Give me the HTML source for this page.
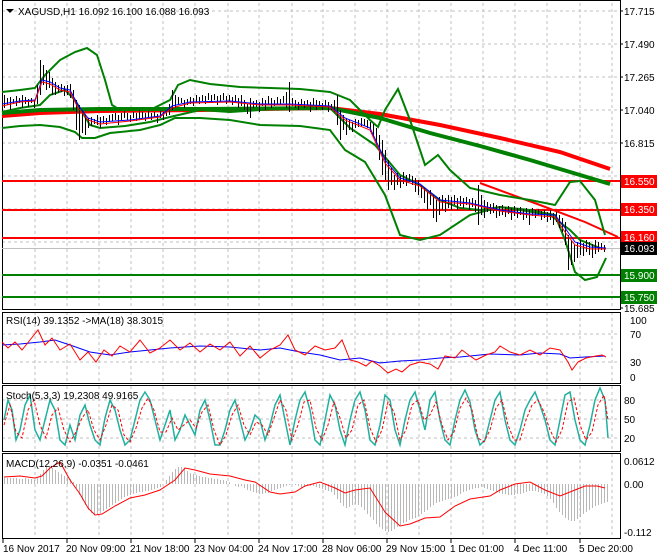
<!DOCTYPE html>
<html><head><meta charset="utf-8"><style>
html,body{margin:0;padding:0;background:#fff;}
svg{display:block;font-family:"Liberation Sans",sans-serif;font-size:10px;}
</style></head><body>
<svg width="660" height="560" viewBox="0 0 660 560" xmlns="http://www.w3.org/2000/svg">
<rect width="660" height="560" fill="#fff"/>
<g stroke="#c0c0c0" stroke-dasharray="3,3" stroke-width="1" fill="none" shape-rendering="crispEdges">
<path d="M35 3V309M67 3V309M99 3V309M131 3V309M163 3V309M195 3V309M228 3V309M259 3V309M292 3V309M323 3V309M355 3V309M387 3V309M419 3V309M451 3V309M483 3V309M515 3V309M547 3V309M580 3V309M612 3V309"/>
<path d="M2 11H620M2 44H620M2 77H620M2 110H620M2 143H620M2 176H620M2 209H620M2 242H620M2 275H620"/>
<path d="M35 312V384M67 312V384M99 312V384M131 312V384M163 312V384M195 312V384M228 312V384M259 312V384M292 312V384M323 312V384M355 312V384M387 312V384M419 312V384M451 312V384M483 312V384M515 312V384M547 312V384M580 312V384M612 312V384"/>
<path d="M2 334H620M2 362H620"/>
<path d="M35 386V452M67 386V452M99 386V452M131 386V452M163 386V452M195 386V452M228 386V452M259 386V452M292 386V452M323 386V452M355 386V452M387 386V452M419 386V452M451 386V452M483 386V452M515 386V452M547 386V452M580 386V452M612 386V452"/>
<path d="M2 400H620M2 419H620M2 438H620"/>
<path d="M35 454V538M67 454V538M99 454V538M131 454V538M163 454V538M195 454V538M228 454V538M259 454V538M292 454V538M323 454V538M355 454V538M387 454V538M419 454V538M451 454V538M483 454V538M515 454V538M547 454V538M580 454V538M612 454V538"/>
</g>
<g stroke="#000" fill="none" stroke-width="1" shape-rendering="crispEdges">
<rect x="2.5" y="0.5" width="618" height="309"/>
<rect x="2.5" y="312.5" width="618" height="71"/>
<rect x="2.5" y="385.5" width="618" height="66"/>
<rect x="2.5" y="453.5" width="618" height="85"/>
</g>
<g stroke-width="2" shape-rendering="crispEdges">
<path d="M2 181H620" stroke="#ff0000"/>
<path d="M2 210H620" stroke="#ff0000"/>
<path d="M2 238H620" stroke="#ff0000"/>
<path d="M2 275H620" stroke="#008000"/>
<path d="M2 297H620" stroke="#008000"/>
</g>
<path d="M2 248.5H620" stroke="#c0c0c0" stroke-width="1"/>
<path d="M2 116L40 113L100 111L200 110L330 108L380 114L440 125L500 138L560 152L610 169" stroke="#ff0000" stroke-width="4" fill="none"/>
<path d="M2 113L40 110L100 109L200 109L330 108L380 118L430 133L480 146L530 160L570 172L610 184" stroke="#008000" stroke-width="4" fill="none"/>
<path d="M480 183L540 205L585 222L618 237" stroke="#ff0000" stroke-width="2" fill="none"/>
<g stroke="#008000" stroke-width="2" fill="none">
<path d="M2 92L20 90L35 88L45 75L60 60L75 52L87 48L97 55L105 80L112 105L120 110L150 110L170 100L178 85L190 80L210 84L240 87L270 88L300 89L330 92L350 100L370 120L378 127L385 110L398 89L410 120L425 165L438 155L450 170L470 188L500 195L530 200L555 205L570 182L580 181L595 200L605 235"/>
<path d="M2 112L20 108L40 105L50 95L65 90L75 100L90 125L100 128L125 126L150 122L170 117L200 110L230 112L260 110L290 108L310 106L330 108L350 128L375 145L400 175L420 185L440 200L460 208L480 210L500 207L520 210L550 215L570 230L580 240L600 248"/>
<path d="M2 128L20 126L40 125L60 127L75 132L82 138L95 138L110 133L140 130L160 125L175 118L200 118L230 120L260 125L300 126L330 130L345 150L365 162L385 195L400 235L420 240L440 235L470 215L500 207L530 210L555 215L565 240L575 272L585 280L597 277L606 258"/>
</g>
<g stroke="#000" stroke-width="1" shape-rendering="crispEdges" transform="translate(0.5,0)">
<path d="M4 95V108M7 98V105M10 97V110M13 99V104M16 96V106M19 98V103M22 95V108M25 97V104M28 99V107M31 98V103M34 100V108M37 85V104M40 60V95M43 65V85M46 70V90M49 72V88M52 78V95M55 82V95M58 85V93M61 84V92M64 86V96M67 85V95M70 84V98M73 90V110M76 100V130M79 105V140M82 110V133M85 115V135M88 118V128M91 117V126M94 119V124M97 115V125M100 117V128M103 116V123M106 118V125M109 115V122M112 114V121M115 113V120M118 115V125M121 113V120M124 111V118M127 113V120M130 115V122M133 112V118M136 113V121M139 110V120M142 112V118M145 113V121M148 111V117M151 113V120M154 112V117M157 114V123M160 111V118M163 112V120M166 110V116M169 104V115M172 90V110M175 95V108M178 97V105M181 98V103M184 100V108M187 99V105M190 97V104M193 98V106M196 95V103M199 97V104M202 95V101M205 96V104M208 93V100M211 95V103M214 94V100M217 96V105M220 95V102M223 93V100M226 96V104M229 95V102M232 97V105M235 95V103M238 98V108M241 95V106M244 100V110M247 104V114M250 98V118M253 101V108M256 100V107M259 102V112M262 98V106M265 100V110M268 96V104M271 98V108M274 100V106M277 97V105M280 99V104M283 96V103M286 92V108M289 82V112M292 98V106M295 100V108M298 102V110M301 99V105M304 101V108M307 100V106M310 102V112M313 98V105M316 100V110M319 101V106M322 103V110M325 100V106M328 102V112M331 104V110M334 100V112M337 95V125M340 110V140M343 115V130M346 118V135M349 120V130M352 122V132M355 119V128M358 120V127M361 118V126M364 119V126M367 120V128M370 122V132M373 124V137M376 128V145M379 135V160M382 140V175M385 150V180M388 160V190M391 168V185M394 175V190M397 173V185M400 176V188M403 172V184M406 175V186M409 174V182M412 176V185M415 178V192M418 180V195M421 185V198M424 188V203M427 192V210M430 190V205M433 195V218M436 200V222M439 197V215M442 195V210M445 198V212M448 195V208M451 197V210M454 195V205M457 198V210M460 196V206M463 198V208M466 197V205M469 199V210M472 198V207M475 200V212M478 185V225M481 195V215M484 200V218M487 202V212M490 204V214M493 203V213M496 205V218M499 206V216M502 205V215M505 207V217M508 206V214M511 208V220M514 206V216M517 208V218M520 207V215M523 209V220M526 208V218M529 210V225M532 208V216M535 210V218M538 209V215M541 211V220M544 210V218M547 212V222M550 210V220M553 213V225M556 212V222M559 215V228M562 218V232M565 222V245M568 235V270M571 240V265M574 245V262M577 242V258M580 240V255M583 243V256M586 240V252M589 242V255M592 244V258M595 240V254M598 242V252M601 243V250M604 245V252"/>
</g>
<path d="M2 104L20 101L35 100L42 80L50 82L60 88L70 90L78 105L88 118L100 122L130 120L160 116L172 106L190 102L230 101L260 104L290 104L330 106L345 118L370 128L385 160L400 178L420 184L440 200L470 203L500 210L530 214L555 215L565 228L575 242L590 247L606 248" stroke="#0000ff" stroke-width="1" fill="none"/>
<path d="M2 106L20 102L35 101L42 82L50 84L60 90L70 92L78 108L88 120L100 124L130 121L160 117L172 108L190 103L230 102L260 105L290 105L330 107L345 120L370 130L385 163L400 180L420 186L440 202L470 204L500 211L530 215L555 217L565 232L575 245L590 249L606 249" stroke="#ff0000" stroke-width="1" fill="none"/>
<path d="M2 345L20 344L40 342L55 340L70 345L90 352L110 355L130 352L150 350L170 348L200 346L230 347L260 350L280 348L300 352L320 355L340 360L360 358L380 363L400 361L420 360L440 358L460 357L490 354L520 355L540 353L560 354L570 358L585 357L605 356" stroke="#0000ff" stroke-width="1" fill="none"/>
<path d="M2 342L8 348L15 342L22 350L30 340L38 330L45 345L52 338L60 350L70 344L80 360L88 352L96 362L104 350L112 356L120 346L130 352L140 340L150 353L160 348L170 340L180 350L190 343L200 352L210 344L220 350L230 342L240 356L250 346L260 358L270 350L280 345L288 335L295 350L305 355L315 346L325 350L335 348L342 340L350 360L358 362L366 366L372 361L380 366L388 373L396 369L402 372L410 365L420 362L430 364L438 369L445 356L455 358L462 350L470 356L476 360L486 355L495 352L500 346L510 352L520 355L530 350L540 355L550 348L560 350L568 362L572 370L578 362L586 358L596 356L602 355L606 357" stroke="#ff0000" stroke-width="1" fill="none"/>
<path d="M4 420L8 400L12 410L16 440L20 430L25 405L30 395L35 430L40 440L45 420L50 400L55 410L60 440L65 445L70 425L75 440L80 415L85 405L90 425L95 440L100 445L105 418L110 400L115 410L120 430L125 445L130 440L135 420L140 400L145 392L150 400L155 420L160 440L165 425L170 410L175 440L180 430L185 415L190 425L195 435L200 410L205 400L210 420L215 445L220 445L225 430L230 410L235 400L240 420L245 440L250 430L255 415L260 420L265 440L270 425L275 405L280 395L285 420L290 445L295 420L300 400L305 392L310 410L315 440L320 445L325 420L330 395L335 405L340 430L345 445L350 420L355 400L360 392L365 410L370 440L375 445L380 425L385 395L390 400L395 430L400 445L405 420L410 400L415 392L420 410L425 430L430 400L435 392L440 420L445 440L450 445L455 420L460 400L465 390L470 402L475 430L480 445L485 440L490 420L495 400L500 392L505 420L510 440L515 445L520 430L525 410L530 400L535 392L540 405L545 420L550 440L555 445L560 420L565 395L570 392L575 420L580 440L585 445L590 425L595 400L600 388L605 400L608 438" stroke="#20b0a0" stroke-width="1.5" fill="none"/>
<path d="M4 425L10 405L16 432L22 438L28 410L34 400L40 425L46 438L52 415L58 408L64 430L70 442L76 432L82 418L88 410L94 430L100 440L106 425L112 405L118 410L124 435L130 442L136 428L142 408L148 398L154 410L160 432L166 432L172 418L178 430L184 425L190 420L196 428L202 412L208 405L214 430L220 445L226 435L232 415L238 405L244 425L250 435L256 422L262 425L268 435L274 418L280 400L286 410L292 440L298 425L304 402L310 400L316 428L322 440L328 425L334 402L340 418L346 438L352 430L358 405L364 400L370 428L376 442L382 430L388 402L394 412L400 440L406 430L412 405L418 400L424 420L430 415L436 402L442 425L448 440L454 432L460 408L466 398L472 410L478 438L484 442L490 430L496 408L502 400L508 425L514 440L520 440L526 420L532 405L538 400L544 412L550 430L556 442L562 430L568 402L574 398L580 425L586 440L592 432L598 405L604 395L608 420" stroke="#ff0000" stroke-width="1" stroke-dasharray="3,2" fill="none"/>
<g stroke="#b8b8b8" stroke-width="1" shape-rendering="crispEdges" transform="translate(0.5,0)">
<path d="M4 484V478M7 484V478M10 484V478M13 484V478M16 484V478M19 484V479M22 484V479M25 484V478M28 484V479M31 484V479M34 484V480M37 484V478M40 484V474M43 484V470M46 484V466M49 484V466M52 484V468M55 484V470M58 484V472M61 484V474M64 484V476M67 484V477M70 484V479M73 484V482M76 484V488M79 484V495M82 484V500M85 484V505M88 484V510M91 484V513M94 484V515M97 484V514M100 484V513M103 484V511M106 484V509M109 484V507M112 484V505M115 484V503M118 484V501M121 484V499M124 484V497M127 484V496M130 484V495M133 484V494M136 484V493M139 484V492M142 484V492M145 484V491M148 484V491M151 484V490M154 484V489M157 484V488M160 484V487M163 484V484M166 484V480M169 484V476M172 484V472M175 484V469M178 484V467M181 484V467M184 484V469M187 484V471M190 484V473M193 484V474M196 484V475M199 484V476M202 484V477M205 484V477M208 484V478M211 484V478M214 484V479M217 484V479M220 484V480M223 484V480M226 484V481M229 484V482M232 484V484M235 484V486M238 484V487M241 484V486M244 484V488M247 484V490M250 484V491M253 484V492M256 484V493M259 484V494M262 484V494M265 484V493M268 484V493M271 484V491M274 484V490M277 484V489M280 484V488M283 484V487M286 484V486M289 484V485M292 484V484M295 484V485M298 484V486M301 484V488M304 484V487M307 484V486M310 484V486M313 484V486M316 484V487M319 484V488M322 484V489M325 484V490M328 484V491M331 484V492M334 484V495M337 484V499M340 484V503M343 484V506M346 484V508M349 484V507M352 484V505M355 484V504M358 484V505M361 484V507M364 484V510M367 484V514M370 484V517M373 484V520M376 484V524M379 484V527M382 484V529M385 484V531M388 484V532M391 484V531M394 484V529M397 484V527M400 484V525M403 484V523M406 484V522M409 484V520M412 484V519M415 484V518M418 484V516M421 484V514M424 484V512M427 484V510M430 484V507M433 484V505M436 484V503M439 484V502M442 484V501M445 484V500M448 484V499M451 484V498M454 484V497M457 484V496M460 484V494M463 484V492M466 484V491M469 484V490M472 484V489M475 484V488M478 484V488M481 484V487M484 484V488M487 484V489M490 484V490M493 484V491M496 484V492M499 484V493M502 484V494M505 484V494M508 484V495M511 484V495M514 484V495M517 484V494M520 484V494M523 484V493M526 484V492M529 484V491M532 484V491M535 484V491M538 484V492M541 484V493M544 484V494M547 484V496M550 484V499M553 484V503M556 484V508M559 484V512M562 484V515M565 484V518M568 484V520M571 484V521M574 484V521M577 484V519M580 484V517M583 484V514M586 484V512M589 484V510M592 484V508M595 484V506M598 484V505M601 484V504M604 484V503M607 484V502"/>
</g>
<path d="M4 477L20 476L35 478L42 476L50 468L55 465L60 462L70 480L80 494L88 508L95 515L102 514L115 506L130 498L145 495L160 490L175 480L185 468L195 470L210 474L230 476L245 480L255 482L270 492L280 494L295 492L305 486L320 482L335 488L345 493L355 490L370 488L385 512L400 526L410 524L425 518L440 517L455 506L470 499L490 496L500 490L515 484L530 482L545 490L560 496L575 490L585 486L597 486L605 488" stroke="#ff0000" stroke-width="1" fill="none"/>
<g fill="#000">
<text x="624" y="15">17.715</text>
<text x="624" y="48">17.490</text>
<text x="624" y="81">17.265</text>
<text x="624" y="114">17.040</text>
<text x="624" y="147">16.815</text>
<text x="624" y="312">15.685</text>
<text x="630" y="324">100</text>
<text x="630" y="338">70</text>
<text x="630" y="366">30</text>
<text x="630" y="381">0</text>
<text x="624" y="404">80</text>
<text x="624" y="423">50</text>
<text x="624" y="442">20</text>
<text x="624" y="465">0.0612</text>
<text x="624" y="488">0.00</text>
<text x="624" y="536">-0.112</text>
</g>
<g stroke="#000" shape-rendering="crispEdges"><path d="M620 11H623M620 44H623M620 77H623M620 110H623M620 143H623M620 308H623"/></g>
<rect x="621" y="175" width="36" height="13" fill="#ff0000"/><text x="624" y="185" fill="#fff">16.550</text>
<rect x="621" y="203" width="36" height="13" fill="#ff0000"/><text x="624" y="213" fill="#fff">16.350</text>
<rect x="621" y="231" width="36" height="13" fill="#ff0000"/><text x="624" y="241" fill="#fff">16.160</text>
<rect x="621" y="242" width="36" height="13" fill="#000"/><text x="624" y="252" fill="#fff">16.093</text>
<rect x="621" y="269" width="36" height="13" fill="#008000"/><text x="624" y="279" fill="#fff">15.900</text>
<rect x="621" y="291" width="36" height="13" fill="#008000"/><text x="624" y="301" fill="#fff">15.750</text>
<path d="M6 9L14 9L10 13Z" fill="#000"/>
<text x="18" y="15" fill="#000">XAGUSD,H1  16.092 16.100 16.088 16.093</text>
<text x="6" y="324" fill="#000">RSI(14) 39.1352  -&gt;MA(18) 38.3015</text>
<text x="6" y="399" fill="#000">Stoch(5,3,3) 19.2308 49.9165</text>
<text x="6" y="467" fill="#000">MACD(12,26,9) -0.0351 -0.0461</text>
<g stroke="#000" shape-rendering="crispEdges"><path d="M3 539V543M67 539V543M131 539V543M195 539V543M259 539V543M323 539V543M387 539V543M451 539V543M515 539V543M580 539V543"/></g>
<g fill="#000">
<text x="3" y="552">16 Nov 2017</text>
<text x="66" y="552">20 Nov 09:00</text>
<text x="130" y="552">21 Nov 18:00</text>
<text x="194" y="552">23 Nov 04:00</text>
<text x="258" y="552">24 Nov 17:00</text>
<text x="322" y="552">28 Nov 06:00</text>
<text x="386" y="552">29 Nov 15:00</text>
<text x="450" y="552">1 Dec 01:00</text>
<text x="514" y="552">4 Dec 11:00</text>
<text x="579" y="552">5 Dec 20:00</text>
</g>
</svg>
</body></html>
